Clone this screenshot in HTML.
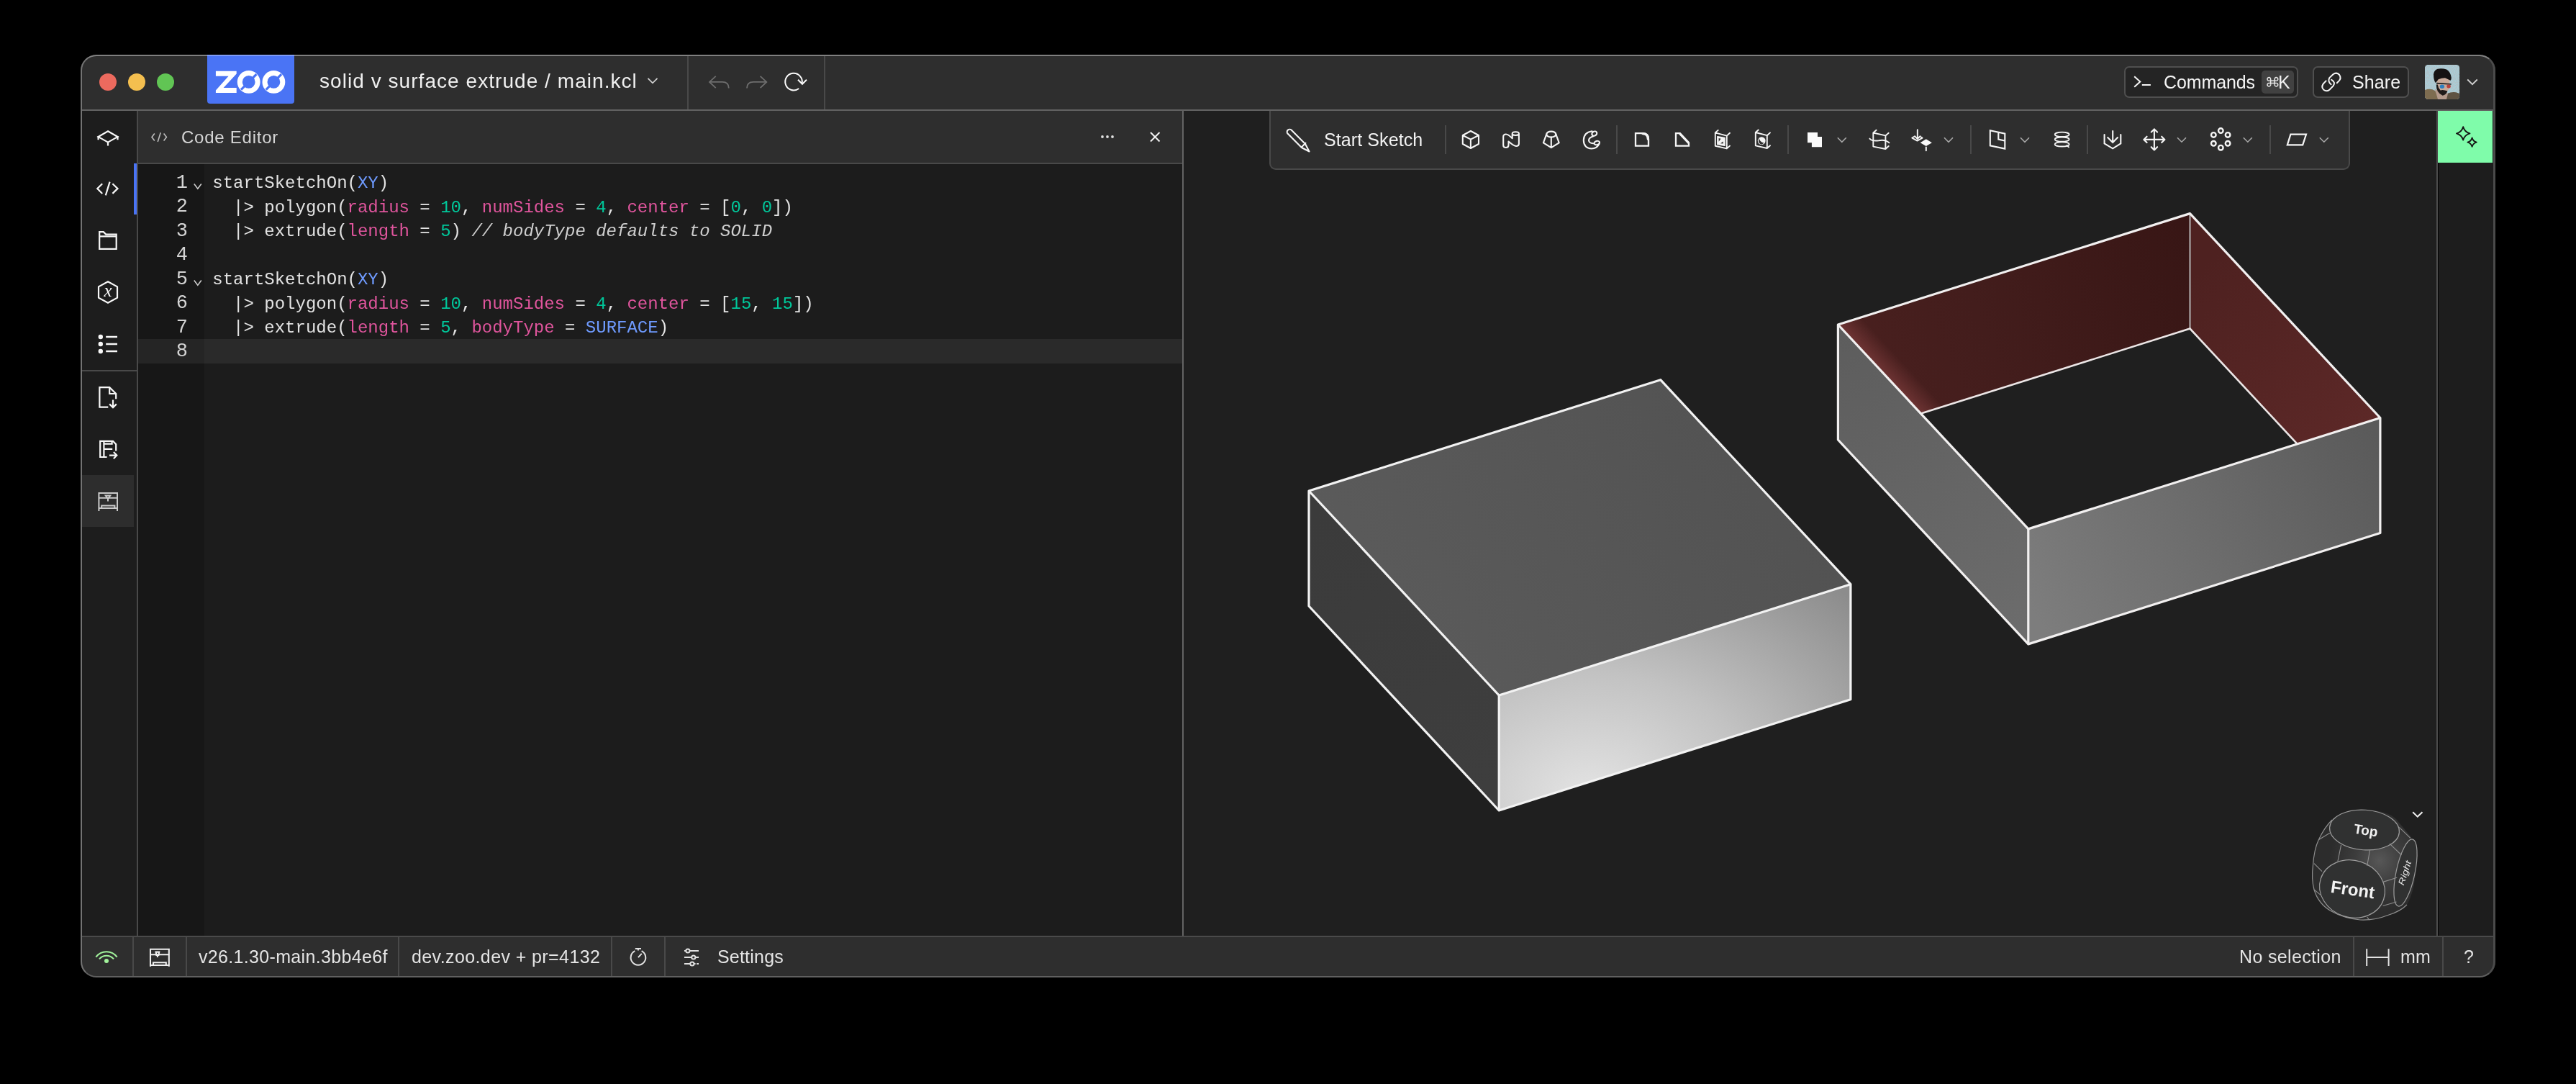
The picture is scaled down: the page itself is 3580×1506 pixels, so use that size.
<!DOCTYPE html>
<html><head><meta charset="utf-8">
<style>
*{margin:0;padding:0;box-sizing:border-box}
html,body{width:3580px;height:1506px;background:#000;overflow:hidden;font-family:"Liberation Sans",sans-serif;color:#e8e8e8}
.a{position:absolute}
#win{position:absolute;left:0;top:0;width:3580px;height:1506px;will-change:transform;clip-path:inset(76px 112px 148px 112px round 22px)}
#frame{position:absolute;left:112px;top:76px;width:3356px;height:1282px;border-radius:22px;border:2px solid #4b4b4b;border-top-color:#808080;border-left-color:#737373;border-bottom-color:#606060;border-right-width:3px;pointer-events:none}
.hl{position:absolute;height:2px;background:#494949}
.vl{position:absolute;width:2px;background:#494949}
.mono{font-family:"Liberation Mono",monospace}
svg{position:absolute;overflow:visible}
.b{color:#6f9bff}.p{color:#e0559d}.n{color:#00c79a}.c{color:#cfcfcf;font-style:italic}
</style></head><body>
<div id="win">
  <div class="a" style="left:112px;top:76px;width:3356px;height:77px;background:#2e2e2e"></div>
  <div class="a" style="left:112px;top:154px;width:78px;height:1146px;background:#1d1d1d"></div>
  <div class="a" style="left:192px;top:154px;width:1451px;height:72px;background:#2e2e2e"></div>
  <div class="a" style="left:192px;top:228px;width:1451px;height:1072px;background:#1c1c1c"></div>
  <div class="a" style="left:192px;top:228px;width:92px;height:1072px;background:#171717"></div>
  <div class="a" style="left:1645px;top:154px;width:1742px;height:1146px;background:#1f1f1f"></div>
  <div class="a" style="left:3389px;top:154px;width:79px;height:1146px;background:#1d1d1d"></div>
  <div class="a" style="left:112px;top:1302px;width:3356px;height:56px;background:#2e2e2e"></div>

  <!-- traffic lights -->
  <div class="a" style="left:138px;top:102px;width:24px;height:24px;border-radius:50%;background:#ec6a5e"></div>
  <div class="a" style="left:178px;top:102px;width:24px;height:24px;border-radius:50%;background:#f4bf4f"></div>
  <div class="a" style="left:218px;top:102px;width:24px;height:24px;border-radius:50%;background:#61c554"></div>
  <!-- zoo logo -->
  <div class="a" style="left:288px;top:76px;width:121px;height:68px;background:#4a74f5;border-radius:0 0 4px 4px"></div>
  <svg class="a" style="left:288px;top:70px" width="121" height="80" viewBox="8 0 121 80">
    <path d="M19.9 28.8 L48.7 28.8 L48.7 32.5 L30.6 52 L48.7 52 L48.7 59 L19.9 59 L19.9 55.4 L37.6 35.8 L19.9 35.8 Z" fill="#fff"/>
    <circle cx="65.7" cy="43.9" r="12.4" fill="none" stroke="#fff" stroke-width="7"/>
    <circle cx="100.4" cy="43.9" r="12.4" fill="none" stroke="#fff" stroke-width="7"/>
    <line x1="55" y1="54.6" x2="76.4" y2="33.2" stroke="#4a74f5" stroke-width="3.2"/>
    <line x1="89.7" y1="54.6" x2="111.1" y2="33.2" stroke="#4a74f5" stroke-width="3.2"/>
  </svg>
  <div class="a" style="left:444px;top:95px;font-size:28px;line-height:36px;letter-spacing:1.05px;color:#f0f0f0;white-space:nowrap">solid v surface extrude / main.kcl</div>
  <svg class="a" style="left:0;top:0" width="3580" height="200">
    <polyline points="900.5,108.8 907,115.3 913.5,108.8" fill="none" stroke="#cfcfcf" stroke-width="1.8"/>
    <g fill="none" stroke="#6e6e6e" stroke-width="1.8">
      <polyline points="994.7,105.8 986,113.9 994.7,122.2"/>
      <path d="M986 113.9 L1004 113.9 Q1012.8 113.9 1012.8 122.6"/>
      <polyline points="1056.6,105.8 1065.3,113.9 1056.6,122.2"/>
      <path d="M1065.3 113.9 L1047 113.9 Q1038 113.9 1038 122.6"/>
    </g>
    <g fill="none" stroke="#fafafa" stroke-width="2">
      <path d="M1110.2 123 A11.8 11.8 0 1 1 1114.6 116"/>
      <polyline points="1109,110.8 1115,116.8 1121,110.8"/>
    </g>
  </svg>
  <div class="vl" style="left:955px;top:76px;height:77px"></div>
  <div class="vl" style="left:1145px;top:76px;height:77px"></div>

  <!-- sidebar icons -->
  <div class="a" style="left:186px;top:227px;width:4px;height:71px;background:#4a74f5"></div>
  <div class="a" style="left:114px;top:660px;width:72px;height:72px;background:#2d2d2d"></div>
  <div class="hl" style="left:113px;top:514px;width:77px"></div>
  <svg class="a" style="left:0;top:0" width="200" height="800">
    <g fill="none" stroke="#f7f7f7" stroke-width="2.2" stroke-linejoin="miter">
      <path d="M150 182.2 L163.5 190.1 L150 197.6 L136.6 190.1 Z"/>
      <path d="M136.6 189 V194.2 M163.5 189 V194.2 M150 197.2 V202.4"/>
      <polyline points="142.2,255.2 135.3,261.9 142.2,268.9"/>
      <polyline points="156.4,255.2 163.5,261.9 156.4,268.9"/>
      <line x1="152.6" y1="252.7" x2="146.8" y2="271.4"/>
      <path d="M138.2 322.2 H143.8 L147.2 325.6 H161.7 V345.8 H138.2 Z M138.2 328.4 H161.7"/>
      <path d="M150 391.2 L163 398.3 V413.6 L150 420.8 L137 413.6 V398.3 Z"/>
      <path d="M147.2 468 H163 M147.2 478 H163 M147.2 488 H163" stroke-width="2.3"/>
      <path d="M150.3 565.6 H138.4 V538.2 H152.2 L161.2 547 V554.2 M152.2 538.2 V547 H161.2"/>
      <path d="M157 555.6 V566 M152.2 561.4 L157 566.2 L161.8 561.4"/>
      <path d="M148.6 635 H139.2 V612.8 H157 L161.2 617.2 V626.4 M144.4 612.8 V635 M144.4 616.6 H155.6 V612.8 M144.4 623.8 H156.2"/>
      <path d="M152 632.6 H162 M157.9 628.1 L162.3 632.6 L157.9 637.2"/>
    </g>
    <text x="150" y="412" font-family="Liberation Serif" font-style="italic" font-size="25" fill="#f7f7f7" text-anchor="middle">x</text>
    <g fill="#f7f7f7"><circle cx="139.8" cy="468" r="3.2"/><circle cx="139.8" cy="478" r="3.2"/><circle cx="139.8" cy="488" r="3.2"/></g>
    <g fill="none" stroke="#c9c9c9" stroke-width="2">
      <path d="M137.4 710 V685 H163 V710 M137.4 691.8 H163 M137.4 706 H163 M141.2 706 V702.6 H159.4 V706"/>
      <path d="M146.8 688.6 H153.2 L150 692.8 Z M150 692.8 V696.4"/>
    </g>
  </svg>

  <!-- code header -->
  <svg class="a" style="left:0;top:0" width="1700" height="240">
    <g fill="none" stroke="#bdbdbd" stroke-width="1.6">
      <polyline points="214.8,185.5 211,190.5 214.8,195.5"/>
      <polyline points="227.6,185.5 231.4,190.5 227.6,195.5"/>
      <line x1="223.2" y1="184.2" x2="219.2" y2="197"/>
      <path d="M1599 184 L1611.5 196.5 M1611.5 184 L1599 196.5" stroke="#f2f2f2" stroke-width="2"/>
    </g>
    <g fill="#e0e0e0"><circle cx="1532" cy="190" r="1.9"/><circle cx="1539" cy="190" r="1.9"/><circle cx="1546" cy="190" r="1.9"/></g>
  </svg>
  <div class="a" style="left:252px;top:176.5px;font-size:24px;line-height:28px;letter-spacing:0.75px;color:#d6d6d6;white-space:nowrap">Code Editor</div>
  <!-- active line -->
  <div class="a" style="left:192px;top:471px;width:92px;height:34px;background:#252525"></div>
  <div class="a" style="left:284px;top:471px;width:1359px;height:34px;background:#2a2a2a"></div>
  <!-- line numbers -->
  <div class="a mono" style="left:192px;top:237.5px;width:69px;text-align:right;font-size:27px;line-height:33.5px;color:#d4d4d4;white-space:pre">1
2
3
4
5
6
7
8</div>
  <svg class="a" style="left:0;top:0" width="400" height="600">
    <g fill="none" stroke="#cfcfcf" stroke-width="1.6">
      <polyline points="269.8,255.5 274.8,262.2 279.8,255.5"/>
      <polyline points="269.8,389.5 274.8,396.2 279.8,389.5"/>
    </g>
  </svg>
  <div class="a mono" id="code" style="left:295.3px;top:238px;font-size:24px;line-height:33.5px;color:#e3e3e3;white-space:pre">startSketchOn(<span class="b">XY</span>)
  |&gt; polygon(<span class="p">radius</span> = <span class="n">10</span>, <span class="p">numSides</span> = <span class="n">4</span>, <span class="p">center</span> = [<span class="n">0</span>, <span class="n">0</span>])
  |&gt; extrude(<span class="p">length</span> = <span class="n">5</span>) <span class="c">// bodyType defaults to SOLID</span>

startSketchOn(<span class="b">XY</span>)
  |&gt; polygon(<span class="p">radius</span> = <span class="n">10</span>, <span class="p">numSides</span> = <span class="n">4</span>, <span class="p">center</span> = [<span class="n">15</span>, <span class="n">15</span>])
  |&gt; extrude(<span class="p">length</span> = <span class="n">5</span>, <span class="p">bodyType</span> = <span class="b">SURFACE</span>)
</div>


  <!-- viewport 3D -->
  <svg class="a" style="left:0;top:0" width="3580" height="1506">
    <defs>
      <linearGradient id="g1top" gradientUnits="userSpaceOnUse" x1="1900" y1="900" x2="2450" y2="560">
        <stop offset="0" stop-color="#5b5b5b"/><stop offset="1" stop-color="#525252"/>
      </linearGradient>
      <linearGradient id="g1left" gradientUnits="userSpaceOnUse" x1="1830" y1="700" x2="2070" y2="1100">
        <stop offset="0" stop-color="#3b3b3b"/><stop offset="1" stop-color="#3e3e3e"/>
      </linearGradient>
      <radialGradient id="g1front" gradientUnits="userSpaceOnUse" cx="2210" cy="1110" r="520" gradientTransform="translate(2210 1110) scale(1 0.75) rotate(-20) translate(-2210 -1110)">
        <stop offset="0" stop-color="#e4e4e4"/><stop offset="0.45" stop-color="#c2c2c2"/><stop offset="1" stop-color="#8c8c8c"/>
      </radialGradient>
      <linearGradient id="g2left" gradientUnits="userSpaceOnUse" x1="2560" y1="460" x2="2800" y2="880">
        <stop offset="0" stop-color="#5d5d5d"/><stop offset="1" stop-color="#6c6c6c"/>
      </linearGradient>
      <linearGradient id="g2front" gradientUnits="userSpaceOnUse" x1="2830" y1="860" x2="3300" y2="600">
        <stop offset="0" stop-color="#7d7d7d"/><stop offset="1" stop-color="#5a5a5a"/>
      </linearGradient>
      <linearGradient id="g2bl" gradientUnits="userSpaceOnUse" x1="2560" y1="520" x2="3040" y2="330">
        <stop offset="0" stop-color="#4a201f"/><stop offset="0.4" stop-color="#431d1c"/><stop offset="1" stop-color="#381615"/>
      </linearGradient>
      <linearGradient id="g2br" gradientUnits="userSpaceOnUse" x1="3050" y1="380" x2="3300" y2="640">
        <stop offset="0" stop-color="#4e2120"/><stop offset="1" stop-color="#5e2928"/>
      </linearGradient>
    </defs>
    <polygon points="1819.0,682.0 2307.7,527.7 2571.9,811.7 2083.2,966.0" fill="url(#g1top)"/>
    <polygon points="1819.0,682.0 2083.2,966.0 2083.2,1126.0 1819.0,842.0" fill="url(#g1left)"/>
    <polygon points="2083.2,966.0 2571.9,811.7 2571.9,971.7 2083.2,1126.0" fill="url(#g1front)"/>
    <g fill="none" stroke="#f2f2f2" stroke-width="3.2" stroke-linejoin="round">
      <polygon points="1819.0,682.0 2307.7,527.7 2571.9,811.7 2571.9,971.7 2083.2,1126.0 1819.0,842.0"/>
      <polyline points="1819.0,682.0 2083.2,966.0 2571.9,811.7"/>
      <line x1="2083.2" y1="966" x2="2083.2" y2="1126"/>
    </g>
    <polygon points="2554.4,451.0 3043.5,296.6 3043.5,456.6 2669.6,574.6" fill="url(#g2bl)"/>
    <polygon points="3043.5,296.6 3307.9,580.5 3192.7,616.9 3043.5,456.6" fill="url(#g2br)"/>
    <defs><linearGradient id="glow" gradientUnits="userSpaceOnUse" x1="2612" y1="512.8" x2="2634" y2="492.4"><stop offset="0" stop-color="#7a3a3a" stop-opacity="0.75"/><stop offset="1" stop-color="#7a3a3a" stop-opacity="0"/></linearGradient></defs>
    <polygon points="2554.4,451 3043.5,296.6 3043.5,456.6 2669.6,574.6" fill="url(#glow)"/>
    <line x1="3043.5" y1="296.6" x2="3043.5" y2="456.6" stroke="#9a9090" stroke-width="2.6"/>
    <polyline points="2669.6,574.6 3043.5,456.6 3192.7,616.9" fill="none" stroke="#ece6e6" stroke-width="2.6"/>
    <polygon points="2554.4,451.0 2818.8,734.9 2818.8,894.9 2554.4,611.0" fill="url(#g2left)"/>
    <polygon points="2818.8,734.9 3307.9,580.5 3307.9,740.5 2818.8,894.9" fill="url(#g2front)"/>
    <g fill="none" stroke="#f2f0f0" stroke-width="3.2" stroke-linejoin="round">
      <polygon points="2554.4,451.0 3043.5,296.6 3307.9,580.5 3307.9,740.5 2818.8,894.9 2554.4,611.0"/>
      <polyline points="2554.4,451.0 2818.8,734.9 3307.9,580.5"/>
      <line x1="2818.8" y1="734.9" x2="2818.8" y2="894.9"/>
    </g>
  </svg>

  <!-- nav cube -->
  <svg class="a" style="left:0;top:0" width="3580" height="1506">
    <defs>
      <radialGradient id="ncg" gradientUnits="userSpaceOnUse" cx="3307" cy="1196" r="70">
        <stop offset="0" stop-color="#575757"/><stop offset="0.5" stop-color="#3c3c3c"/><stop offset="1" stop-color="#2c2c2c"/>
      </radialGradient>
    </defs>
    <path d="M3242.6 1137 Q3262 1124 3286 1125 Q3318 1126 3330 1138 L3350 1162 Q3360 1175 3357 1210 Q3355 1240 3345 1257 Q3336 1266 3320 1271 Q3300 1279 3280 1278 Q3258 1276 3240 1266 Q3222 1256 3216 1236 Q3212 1220 3214.4 1202.8 Q3216 1180 3222.3 1166.8 Q3230 1148 3242.6 1137 Z" fill="url(#ncg)"/>
    <path d="M3241 1139 Q3230 1150 3222.3 1166.8 Q3216 1180 3214.4 1202.8 Q3212 1220 3216 1236 Q3222 1256 3240 1266 Q3258 1276 3280 1278 Q3300 1279 3320 1271 Q3336 1266 3345 1257" fill="none" stroke="#8e8e8e" stroke-width="1.2"/>
    <g fill="#303131" stroke="#9c9c9c" stroke-width="1.2">
      <ellipse cx="3286" cy="1153" rx="48.5" ry="27.8" transform="rotate(4 3286 1153)"/>
      <ellipse cx="3269" cy="1235" rx="46" ry="39.5" transform="rotate(18 3269 1235)"/>
      <ellipse cx="3343" cy="1212.5" rx="13" ry="47.5" transform="rotate(12 3343 1212.5)"/>
    </g>
    <g fill="none" stroke="#8e8e8e" stroke-width="1.1">
      <path d="M3222.3 1166.8 L3237.9 1157.3 M3253.6 1173.8 L3248.9 1196.6 M3293.6 1180.9 L3289.7 1202.8 M3321 1172.2 L3337.5 1188 M3334.3 1149.3 L3349.8 1164.4 M3216 1199.7 L3227 1210.7 M3310.9 1225.6 L3331.3 1219.3 M3311.6 1258.5 L3330.5 1253 M3289.7 1274.2 L3292.8 1278.1 M3225.4 1243.6 L3216 1235.8"/>
    </g>
    <text x="0" y="0" transform="translate(3287 1160) rotate(9)" font-family="Liberation Sans" font-weight="bold" font-size="19" fill="#f2f2f2" text-anchor="middle">Top</text>
    <text x="0" y="0" transform="translate(3268.5 1244) rotate(8)" font-family="Liberation Sans" font-weight="bold" font-size="24" fill="#f2f2f2" text-anchor="middle">Front</text>
    <text x="0" y="0" transform="translate(3346 1214) rotate(-72) scale(1 0.8)" font-family="Liberation Sans" font-style="italic" font-size="15" fill="#e8e8e8" text-anchor="middle">Right</text>
    <polyline points="3353.2,1128.3 3359.8,1134.6 3366.5,1128.3" fill="none" stroke="#f0f0f0" stroke-width="2"/>
  </svg>
  <!-- toolbar -->
  <div class="a" style="left:1764px;top:152px;width:1502px;height:84px;background:#2e2e2e;border:2px solid #494949;border-top:none;border-radius:0 0 9px 9px"></div>
  <div class="a" style="left:2952px;top:92px;width:242px;height:44px;border:2px solid #4f4f4f;border-radius:7px;background:#242424"></div>
  <div class="a" style="left:3143px;top:98px;width:45px;height:31.5px;border-radius:5px;background:#414141"></div>
  <div class="a" style="left:3214px;top:92px;width:134px;height:44px;border:2px solid #4f4f4f;border-radius:7px;background:#242424"></div>
  <div class="a" style="left:1840px;top:179px;font-size:25px;line-height:30px;letter-spacing:0.1px;color:#f2f2f2;white-space:nowrap">Start Sketch</div>
  <div class="vl" style="left:2008px;top:174px;height:40px"></div>
  <div class="vl" style="left:2245.5px;top:174px;height:40px"></div>
  <div class="vl" style="left:2484px;top:174px;height:40px"></div>
  <div class="vl" style="left:2738px;top:174px;height:40px"></div>
  <div class="vl" style="left:2900px;top:174px;height:40px"></div>
  <div class="vl" style="left:3154px;top:174px;height:40px"></div>
  <svg class="a" style="left:0;top:0" width="3580" height="260">
    <g fill="none" stroke="#f5f5f5" stroke-width="2.1" stroke-linejoin="round" stroke-linecap="round">
      <path d="M1794.6 180.5 L1814 199.9 L1819.5 210.5 L1808.9 205 L1790 186.1 A3.3 3.3 0 0 1 1794.6 180.5 Z M1808.8 204.4 L1814.4 198.8"/>
      <path d="M2043.9 182 L2055 188 V200 L2043.9 206 L2032.8 200 V188 Z M2032.8 188 L2043.9 193.6 L2055 188 M2043.9 193.6 V206"/>
      <path d="M2089.2 202 V190 Q2089.2 186.5 2093 186.5 Q2096 186.5 2101.7 192.2 V185.6 A4.6 2.4 0 0 1 2110.9 185.6 V199.5 Q2110.9 203 2107 203 Q2104 203 2096.5 196.5 V201.5 Q2096.5 205 2093 205 Q2089.2 205 2089.2 202 Z M2101.7 185.6 A4.6 2.4 0 0 0 2110.9 185.6"/>
      <ellipse cx="2155.8" cy="186.6" rx="6.6" ry="4"/>
      <path d="M2149.2 186.6 L2144.9 198.3 L2155.8 205.2 L2166.7 198.3 L2162.4 186.6 M2155.8 190.6 V205.2"/>
      <path d="M2212.5 182.2 Q2201 184 2200.8 194.8 Q2201 206 2212 206.5 Q2219 206.5 2222.5 200 M2214.4 189.2 Q2208.2 191 2208 195 Q2208.5 199.5 2215 199.2"/>
      <ellipse cx="2215.8" cy="185.6" rx="3.6" ry="3" transform="rotate(-30 2215.8 185.6)"/>
      <ellipse cx="2219.3" cy="198.6" rx="3.8" ry="2.6" transform="rotate(-15 2219.3 198.6)"/>
      <path d="M2273 202.7 V185.1 H2283 Q2291 185.1 2291 193 V202.7 Z" stroke-linejoin="miter" stroke-width="2.3"/><path d="M2283 185.6 Q2290.4 185.8 2290.4 193.2" stroke-width="3.4"/>
      <path d="M2329 202.7 V185.1 H2334.5 L2347 198.5 V202.7 Z" stroke-linejoin="miter" stroke-width="2.3"/><path d="M2334.8 185.8 L2346.4 198.2" stroke-width="3.2"/>
      <path d="M2383.8 184.4 L2399.8 188.6 V206.4 L2383.8 202.8 Z M2383.8 184.4 L2387.7 180.9 M2399.8 188.6 L2404 184.8 M2399.8 206.4 L2404 202.6" stroke-width="1.9"/>
      <path d="M2386.8 189.6 L2397 191.4 V202.4 L2386.8 200.6 Z" fill="#f5f5f5" stroke-width="1.4"/><path d="M2388.6 192 L2391.6 192.8 L2388.6 196.8 Z M2394.8 196.4 V199.6 L2391 199.2 Z" fill="#2e2e2e" stroke="none"/>
      <path d="M2439.8 184 L2455.8 188.2 V206 L2439.8 202.4 Z M2439.8 184 L2443.7 180.5 M2455.8 188.2 L2460 184.4 M2455.8 206 L2460 202.2" stroke-width="1.9"/>
      <circle cx="2448.2" cy="195.6" r="5.4" fill="#f5f5f5" stroke="none"/><path d="M2444.6 191.8 Q2445.6 197.6 2451.4 198.6 Q2450 201 2446.6 200.2 Q2442.6 197.6 2444.6 191.8 Z" fill="#2e2e2e" stroke="none"/>
      <path d="M2603.3 184.5 L2620.4 188.4 V207 L2603.3 203.6 Z M2603.3 184.5 L2607.6 180.7 M2620.4 188.4 L2624.7 184.8 M2620.4 207 L2624.7 203" stroke-width="1.9"/>
      <path d="M2598.4 192.6 Q2602 196.5 2611 195.2 Q2620 193.5 2625.4 198.3" stroke-width="1.9"/>
      <path d="M2664.8 180.3 V193 M2661 189.2 L2664.8 193 L2668.6 189.2 M2660.4 189.8 L2657.3 191.6 L2664.5 195.6 L2671.6 191.6 L2669 190" stroke-width="1.9"/>
      <path d="M2676.8 204.5 V209.3" stroke-width="2"/>
      <path d="M2765.8 181.3 L2786.3 185.6 V206.6 L2765.8 202.4 Z M2777.3 183.8 V193.6 L2786 195.6" stroke-linejoin="miter" stroke-width="2.1"/>
      <ellipse cx="2865.7" cy="186.8" rx="10" ry="3.1" stroke-width="1.8"/>
      <ellipse cx="2865.7" cy="193.6" rx="10" ry="3.1" stroke-width="1.8"/>
      <ellipse cx="2865.7" cy="200.4" rx="10" ry="3.1" stroke-width="1.8"/>
      <path d="M2872.5 202 L2875 204.4" stroke-width="1.8"/>
      <path d="M2924.6 187.1 V199.5 L2936.2 206.3 L2947.3 199.5 V187.1 M2936.2 182 V198 M2929.2 191 L2936.2 198 L2943 191" stroke-linejoin="miter"/>
      <path d="M2993.9 179.4 V208.4 M2979.4 193.9 H3008.4 M2989.7 183.6 L2993.9 179.4 L2998.1 183.6 M2989.7 204.2 L2993.9 208.4 L2998.1 204.2 M2983.6 189.7 L2979.4 193.9 L2983.6 198.1 M3004.2 189.7 L3008.4 193.9 L3004.2 198.1"/>
      <g stroke-width="2.4"><circle cx="3086.3" cy="181.6" r="3.3"/><circle cx="3096.1" cy="187.4" r="3.3"/><circle cx="3096.1" cy="199.3" r="3.3"/><circle cx="3086.3" cy="205.2" r="3.3"/><circle cx="3076.3" cy="199.3" r="3.3"/><circle cx="3076.3" cy="187.4" r="3.3"/></g>
      <path d="M3183.4 186.6 H3205 L3200.2 201.3 H3178.8 Z" stroke-linejoin="miter" stroke-width="2.2"/>
    </g>
    <path d="M2512 184.1 H2526 V190.1 H2532 V204.2 H2517.9 V198.2 H2512 Z" fill="#fafafa"/>
    <path d="M2676.8 193.3 L2684.9 198.2 L2676.8 203 L2668.7 198.2 Z" fill="#fafafa"/>
    <g fill="none" stroke="#a8a8a8" stroke-width="1.6">
      <polyline points="2553.8,191.3 2559.8,197.3 2565.8,191.3"/><polyline points="2702,191.3 2708.0,197.3 2714,191.3"/><polyline points="2808,191.3 2814.0,197.3 2820,191.3"/><polyline points="3026,191.2 3032.0,197.2 3038,191.2"/><polyline points="3117.8,191.2 3123.8,197.2 3129.8,191.2"/><polyline points="3223.8,191.2 3229.8,197.2 3235.8,191.2"/>
    </g>
    <!-- right title elements -->
    <g fill="none" stroke="#f5f5f5" stroke-width="2">
      <polyline points="2966.2,106.2 2974.3,113.4 2966.2,120.8"/>
      <line x1="2976.8" y1="118" x2="2988.9" y2="118"/>
    </g>
    <g fill="none" stroke="#f5f5f5" stroke-width="2" stroke-linecap="round">
      <path d="M3239.6 117.2 Q3234.6 113.2 3237.4 108 L3242.4 103.3 Q3247.5 99.6 3251.2 104 Q3254.2 108.6 3250.6 112.4 L3247.8 115.2"/>
      <path d="M3232.6 112.4 L3228.6 116.6 Q3225.6 121.4 3229.4 124.8 Q3233.4 128 3237.6 124.4 L3242.6 119.4 Q3246.4 114.4 3240.2 110.8"/>
    </g>
    <!-- cmd symbol -->
    <g fill="none" stroke="#e8e8e8" stroke-width="1.5">
      <path d="M3155.6 110 V117.6 M3161.2 110 V117.6 M3153.2 112.2 H3163.6 M3153.2 115.4 H3163.6"/>
      <path d="M3155.6 110.2 A2.3 2.3 0 1 0 3153.2 112.2 M3161.2 110.2 A2.3 2.3 0 1 1 3163.6 112.2 M3155.6 117.4 A2.3 2.3 0 1 1 3153.2 115.4 M3161.2 117.4 A2.3 2.3 0 1 0 3163.6 115.4"/>
    </g>
    <!-- avatar -->
    <defs><clipPath id="avc"><rect x="3370" y="90" width="48.2" height="48" rx="4.5"/></clipPath>
    <filter id="nz" x="0" y="0" width="100%" height="100%"><feTurbulence type="fractalNoise" baseFrequency="0.9" numOctaves="2" seed="3"/><feColorMatrix type="matrix" values="0 0 0 0 0.36  0 0 0 0 0.68  0 0 0 0 0.78  0 0 0 2.2 -0.8"/></filter></defs>
    <g clip-path="url(#avc)">
      <rect x="3370" y="90" width="48.2" height="48" fill="#b2c2c8"/>
      <rect x="3370" y="90" width="48.2" height="48" filter="url(#nz)" opacity="0.9"/>
      <path d="M3370 125 Q3378 122 3384 126 L3392 138 H3370 Z" fill="#7d6c50"/>
      <path d="M3401 130 Q3410 126 3418.2 130 V138 H3398 Z" fill="#5e5242"/>
      <path d="M3384 124 L3388 138 H3400 L3402 130 Z" fill="#b49a8c"/>
      <path d="M3386.7 108.5 Q3395 104 3404.2 108.5 L3404.4 121 Q3402 128 3396 131 Q3388 128 3386.4 118 Z" fill="#c9ab9b"/>
      <path d="M3385.8 117.5 Q3385.5 128.5 3394.6 132.8 Q3399.6 132.2 3401.4 126.6 Q3396 124.4 3391.6 125.4 Q3388.4 122 3387.8 117.5 Z" fill="#1f1a19"/>
      <path d="M3382 103 Q3383 97 3387.7 95.8 Q3393.9 94.6 3400.1 96.6 Q3405.3 99.5 3406.8 107.7 Q3406.6 111.6 3405.3 111.8 Q3402 110 3398 108.2 Q3393 108.4 3388.7 110.3 Q3386.6 113.9 3384.6 114.9 Q3382 111 3382 103 Z" fill="#151212"/>
      <path d="M3386 115.6 L3406.6 117" stroke="#1a1a1a" stroke-width="1.6"/>
      <ellipse cx="3393.9" cy="120.2" rx="3.2" ry="2.8" fill="#2d7fc0"/>
      <ellipse cx="3403.1" cy="120" rx="2.8" ry="2.4" fill="#b8403c"/>
    </g>

    <polyline points="3429.2,110.5 3436,117.2 3442.8,110.5" fill="none" stroke="#cfcfcf" stroke-width="1.8"/>
    <!-- AI button -->
    <rect x="3388" y="154" width="76" height="72" fill="#7ffcaa"/>
    <g fill="none" stroke="#141414" stroke-width="1.9" stroke-linejoin="round">
      <path d="M3423.2 176.20000000000002 Q3425.2239999999997 183.376 3432.3999999999996 185.4 Q3425.2239999999997 187.424 3423.2 194.6 Q3421.176 187.424 3414.0 185.4 Q3421.176 183.376 3423.2 176.20000000000002 Z"/>
      <path d="M3435.6 191.4 Q3436.964 196.236 3441.7999999999997 197.6 Q3436.964 198.964 3435.6 203.79999999999998 Q3434.236 198.964 3429.4 197.6 Q3434.236 196.236 3435.6 191.4 Z"/>
    </g>
  </svg>
  <div class="a" style="left:3007px;top:100px;font-size:25px;line-height:28px;letter-spacing:-0.1px;color:#f5f5f5;white-space:nowrap">Commands</div>
  <div class="a" style="left:3166px;top:100px;font-size:25px;line-height:28px;color:#f0f0f0;white-space:nowrap">K</div>
  <div class="a" style="left:3269px;top:100px;font-size:25px;line-height:28px;letter-spacing:0.1px;color:#f5f5f5;white-space:nowrap">Share</div>

  <!-- status bar -->
  <div class="vl" style="left:184px;top:1302px;height:56px"></div>
  <div class="vl" style="left:258px;top:1302px;height:56px"></div>
  <div class="vl" style="left:553px;top:1302px;height:56px"></div>
  <div class="vl" style="left:849px;top:1302px;height:56px"></div>
  <div class="vl" style="left:923px;top:1302px;height:56px"></div>
  <div class="vl" style="left:3270px;top:1302px;height:56px"></div>
  <div class="vl" style="left:3394px;top:1302px;height:56px"></div>
  <div class="a" style="left:276px;top:1315px;font-size:25px;line-height:28px;letter-spacing:0.33px;color:#e4e4e4;white-space:nowrap">v26.1.30-main.3bb4e6f</div>
  <div class="a" style="left:572px;top:1315px;font-size:25px;line-height:28px;letter-spacing:0.4px;color:#e4e4e4;white-space:nowrap">dev.zoo.dev + pr=4132</div>
  <div class="a" style="left:997px;top:1315px;font-size:25px;line-height:28px;letter-spacing:0.2px;color:#e4e4e4;white-space:nowrap">Settings</div>
  <div class="a" style="left:3112px;top:1315px;font-size:25px;line-height:28px;letter-spacing:0.35px;color:#e4e4e4;white-space:nowrap">No selection</div>
  <div class="a" style="left:3336px;top:1315px;font-size:25px;line-height:28px;letter-spacing:0.2px;color:#e4e4e4;white-space:nowrap">mm</div>
  <div class="a" style="left:3424px;top:1315px;font-size:25px;line-height:28px;color:#e4e4e4;white-space:nowrap">?</div>
  <svg class="a" style="left:0;top:0" width="3580" height="1506">
    <g fill="none" stroke="#a2f39c" stroke-width="2">
      <path d="M133.3 1329.6 A18.2 18.2 0 0 1 162.7 1329.6"/>
      <path d="M138 1332.4 A13.1 13.1 0 0 1 158 1332.4"/>
    </g>
    <circle cx="148" cy="1334.9" r="3" fill="#a2f39c"/>
    <g fill="none" stroke="#efefef" stroke-width="2.1">
      <path d="M209 1342.8 V1318.8 H234.8 V1342.8 M209 1326.2 H234.8 M209 1341 H234.8 M213 1341 V1337.2 H230.8 V1341"/>
      <path d="M216.6 1322.6 H221.2 L220.4 1327 H217.4 Z M218.9 1327 V1330"/>
    </g>
    <g fill="none" stroke="#e2e2e2" stroke-width="2">
      <path d="M882.3 1321.2 A10.3 10.3 0 1 0 891.6 1321.2"/>
      <path d="M882.8 1318 H891 M886.9 1318 V1320.6 M886.9 1330.2 L891.8 1324.8"/>
      <path d="M951 1321 H953.4 M958.4 1321 H971 M951 1330 H961.3 M966.3 1330 H971 M951 1339 H959.4 M964.4 1339 H966.6 M968.2 1339 H971"/>
      <circle cx="955.9" cy="1321" r="2.6"/><circle cx="963.8" cy="1330" r="2.6"/><circle cx="961.9" cy="1339" r="2.6"/>
      <path d="M3289.2 1318.2 V1342 M3319.6 1318.2 V1342 M3289.2 1330 H3319.6"/>
    </g>
  </svg>
  <!-- lines -->
  <div class="hl" style="left:112px;top:152px;width:3356px;background:#626262"></div>
  <div class="hl" style="left:192px;top:226px;width:1451px"></div>
  <div class="hl" style="left:112px;top:1300px;width:3356px;background:#4a4a4a"></div>
  <div class="vl" style="left:190px;top:154px;height:1146px"></div>
  <div class="vl" style="left:1643px;top:154px;height:1146px;background:#636363"></div>
  <div class="vl" style="left:3386px;top:154px;height:1146px;background:#4b4b4b"></div>
</div>
<div id="frame"></div>
<div class="a" style="left:288px;top:76px;width:121px;height:2px;background:#7f9cf6"></div>
</body></html>
